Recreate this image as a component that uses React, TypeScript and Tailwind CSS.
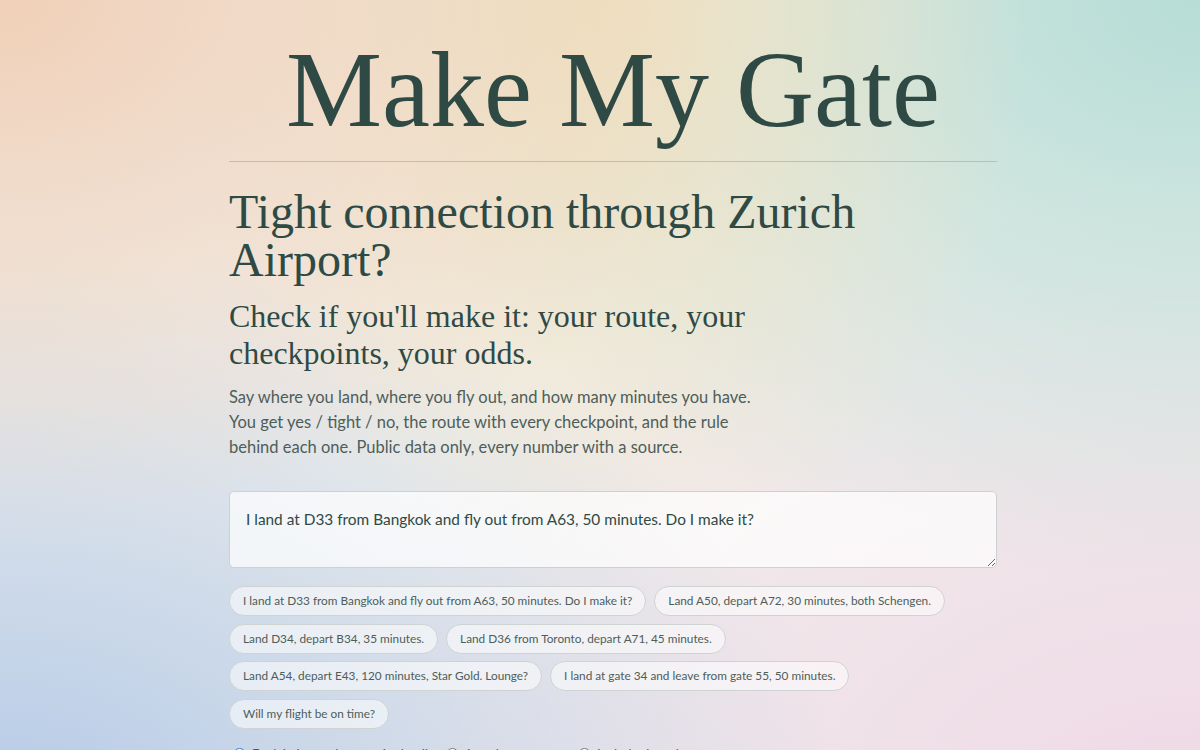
import { useState } from 'react'

const examples = [
  'I land at D33 from Bangkok and fly out from A63, 50 minutes. Do I make it?',
  'Land A50, depart A72, 30 minutes, both Schengen.',
  'Land D34, depart B34, 35 minutes.',
  'Land D36 from Toronto, depart A71, 45 minutes.',
  'Land A54, depart E43, 120 minutes, Star Gold. Lounge?',
  'I land at gate 34 and leave from gate 55, 50 minutes.',
  'Will my flight be on time?',
]

const modes = ['Explain it step by step, in detail', 'Just the answers', 'Include the rule sources']

export default function App() {
  const [question, setQuestion] = useState(examples[0])
  const [mode, setMode] = useState(0)

  return (
    <div className="min-h-screen w-full bg-[#f1f0ec] bg-[radial-gradient(ellipse_at_0%_0%,#f0d0b8_0%,transparent_45%),radial-gradient(ellipse_at_50%_0%,#f0e1c0_0%,transparent_50%),radial-gradient(ellipse_at_100%_0%,#b6ddd6_0%,transparent_50%),radial-gradient(ellipse_at_0%_100%,#b3c9e7_0%,transparent_50%),radial-gradient(ellipse_at_100%_100%,#efd8e6_0%,transparent_55%)] text-[#2f4a45]">
      <main className="ml-[229px] w-[768px] pb-16 pt-[26px]">
        {/* Title */}
        <h1 className="text-center font-['Liberation_Serif',serif] text-[108px] leading-[128px] text-[#2f4a45]">
          Make My Gate
        </h1>
        <div className="mt-[7px] h-px w-full bg-[#b9bfb9]" />

        {/* Intro */}
        <h2 className="mt-[26px] font-['Liberation_Serif',serif] text-[48px] leading-[48px]">
          Tight connection through Zurich Airport?
        </h2>
        <h3 className="mt-[14px] max-w-[545px] font-['Liberation_Serif',serif] text-[32px] leading-[37px]">
          Check if you'll make it: your route, your checkpoints, your odds.
        </h3>
        <p className="mt-[13px] max-w-[535px] font-['Lato',sans-serif] text-[16.5px] leading-[25px] text-[#4d5e5a]">
          Say where you land, where you fly out, and how many minutes you have. You get yes / tight / no, the route
          with every checkpoint, and the rule behind each one. Public data only, every number with a source.
        </p>

        {/* Question box */}
        <textarea
          value={question}
          onChange={(e) => setQuestion(e.target.value)}
          className="mt-[31px] block h-[77px] w-full rounded-[5px] border border-[#cdd2d0] bg-white/70 px-4 py-[15px] font-['Lato',sans-serif] text-[15.4px] leading-[24px] text-[#2f4a45] outline-none"
        />

        {/* Example chips */}
        <div className="mt-[18px] flex flex-wrap gap-x-2 gap-y-[7.5px]">
          {examples.map((ex) => (
            <button
              key={ex}
              onClick={() => setQuestion(ex)}
              className="h-[30px] rounded-full border border-[#cfd3d2] bg-white/55 px-[13px] font-['Lato',sans-serif] text-[11.8px] text-[#4d5e5a]"
            >
              {ex}
            </button>
          ))}
        </div>

        {/* Answer mode */}
        <div className="mt-[16px] flex items-center gap-[18px] pl-[4px] font-['Lato',sans-serif] text-[13px] text-[#4d5e5a]">
          {modes.map((m, i) => (
            <label key={m} className="flex items-center gap-[6px]">
              <input
                type="radio"
                name="mode"
                checked={mode === i}
                onChange={() => setMode(i)}
                className="m-0 h-[13px] w-[13px] accent-[#3b6fd8]"
              />
              {m}
            </label>
          ))}
        </div>
      </main>
    </div>
  )
}
